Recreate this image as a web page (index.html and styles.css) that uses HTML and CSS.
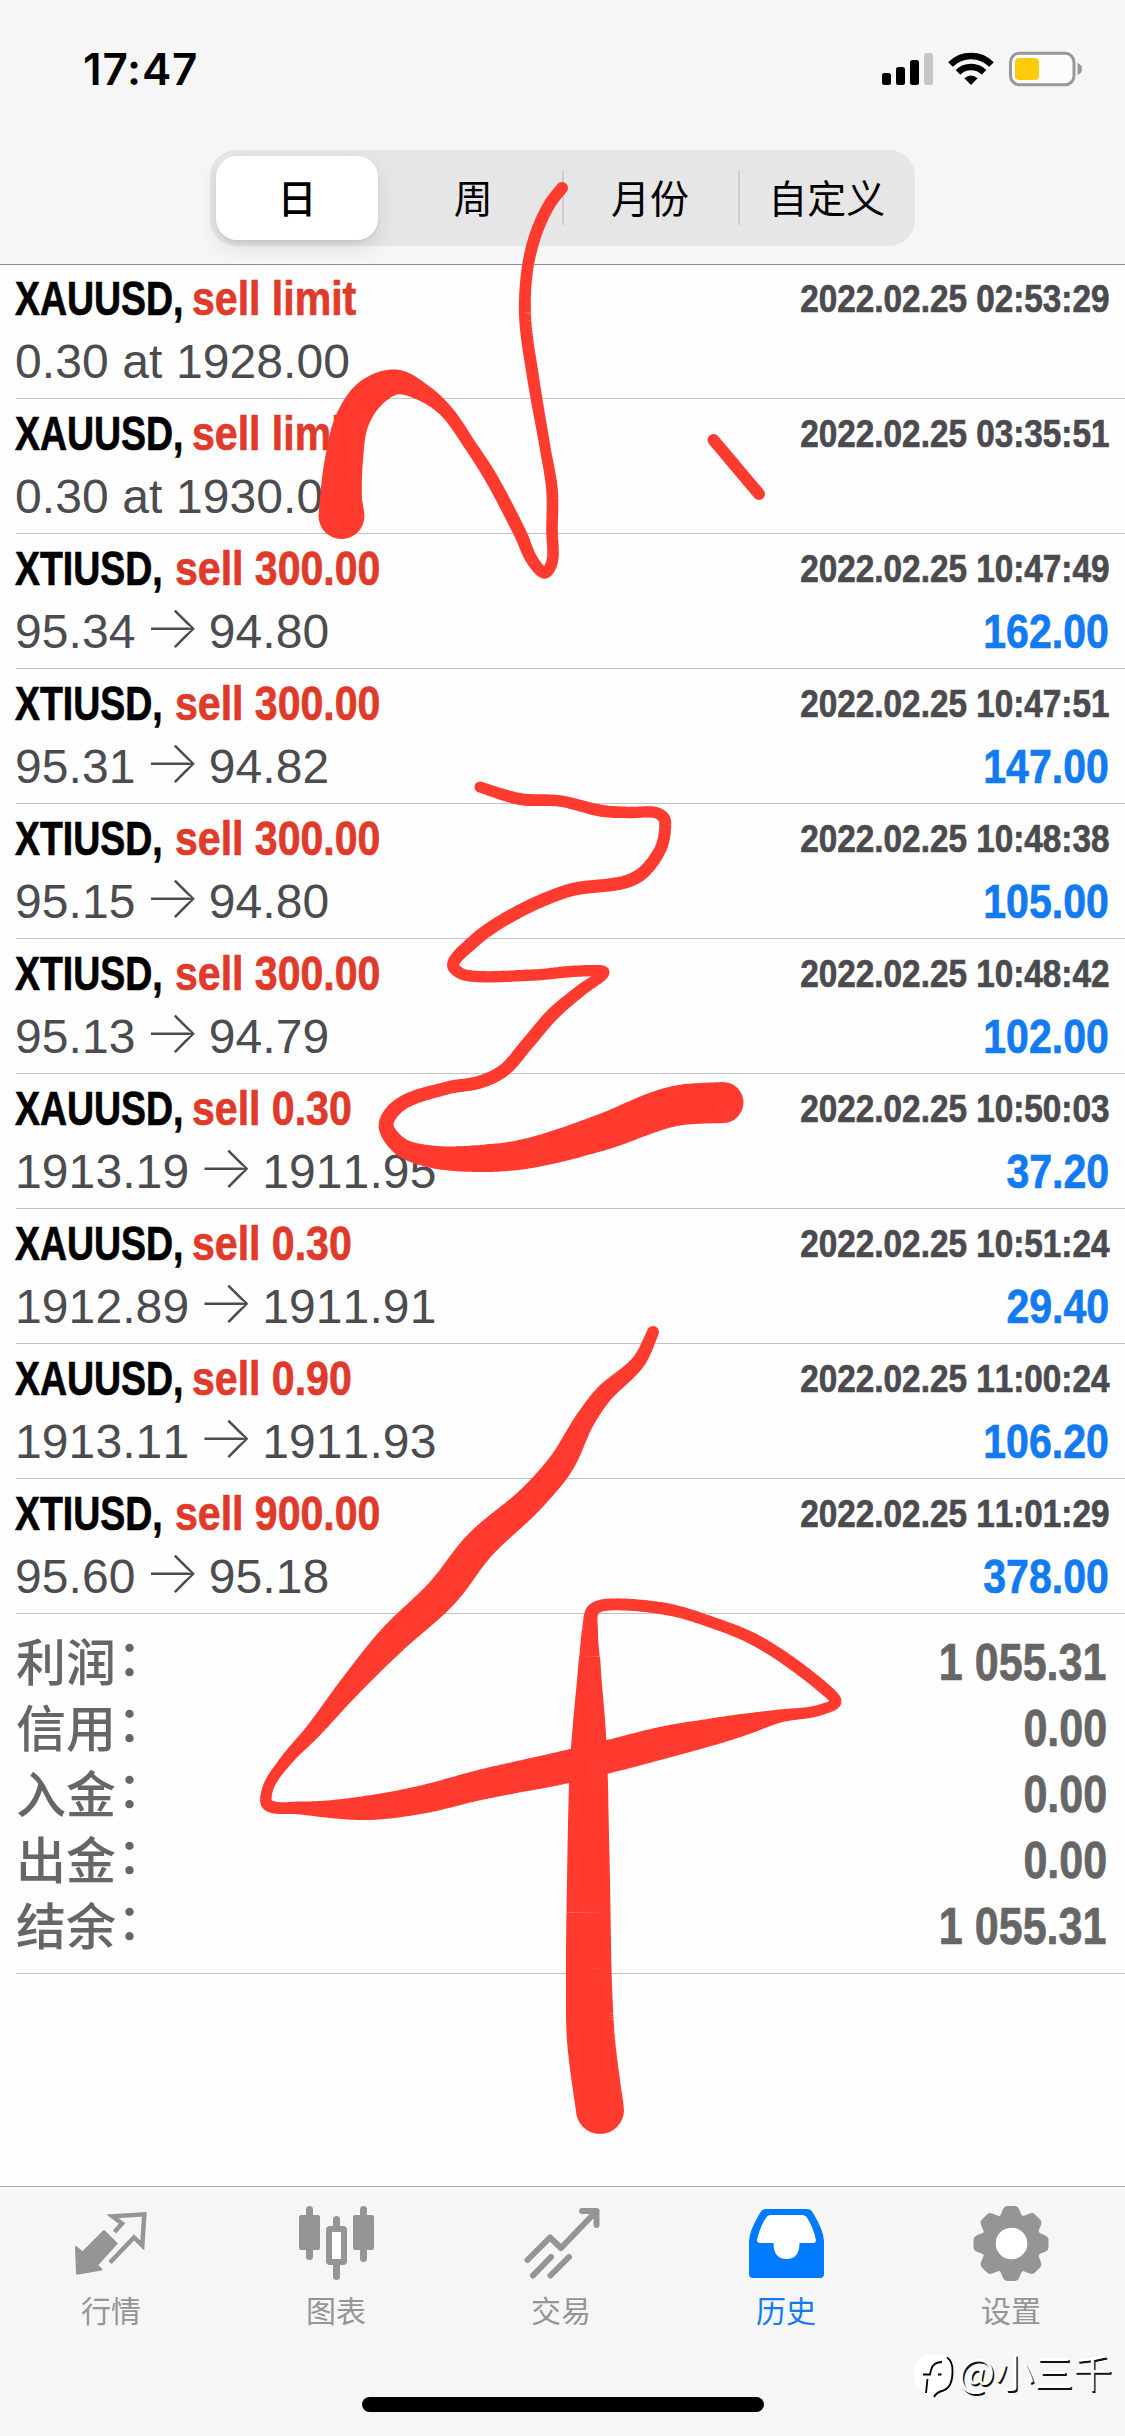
FILE: index.html
```html
<!DOCTYPE html>
<html lang="zh-CN">
<head>
<meta charset="utf-8">
<title>历史</title>
<link rel="stylesheet" href="styles.css">
</head>
<body>
<div class="screen">
  <header class="top">
    <div class="status">
      <span class="clock">17:47</span>
      <svg class="status-icons" width="204" height="40" viewBox="880 48 204 40">
        <g fill="#000">
          <rect x="882" y="73" width="9" height="12" rx="2.5"/>
          <rect x="896" y="67" width="9" height="18" rx="2.5"/>
          <rect x="910" y="60" width="9" height="25" rx="2.5"/>
        </g>
        <rect x="924" y="53" width="9" height="32" rx="2.5" fill="#c6c6c6"/>
        <g fill="none" stroke="#000" stroke-width="6.6">
          <path d="M950.5 64.5a29 29 0 0 1 41 0"/>
          <path d="M958 72.3a18.5 18.5 0 0 1 26 0"/>
        </g>
        <path d="M971 85l-6.6-6.8q6.600-5.400 13.200 0z"/>
        <rect x="1010.500" y="53.200" width="63.500" height="31.600" rx="9" fill="#fcfcfc" stroke="#989898" stroke-width="3"/>
        <rect x="1015" y="58" width="24" height="22" rx="4" fill="#fecb09"/>
        <path d="M1077.500 63q4.500 1.500 4.500 6t-4.500 6z" fill="#989898"/>
      </svg>
    </div>
    <nav class="segments">
      <span class="segment segment-on">日</span>
      <span class="segment">周</span>
      <span class="segment segment-line">月份</span>
      <span class="segment segment-line">自定义</span>
    </nav>
  </header>

  <main class="list">
    <article class="deal"><div class="line head"><b class="symbol xau"><i>XAUUSD,</i></b><b class="side">sell limit</b><b class="date">2022.02.25 02:53:29</b></div><div class="line foot"><span class="price">0.30 at 1928.00</span></div></article>
    <article class="deal"><div class="line head"><b class="symbol xau"><i>XAUUSD,</i></b><b class="side">sell limit</b><b class="date">2022.02.25 03:35:51</b></div><div class="line foot"><span class="price">0.30 at 1930.00</span></div></article>
    <article class="deal"><div class="line head"><b class="symbol xti"><i>XTIUSD,</i></b><b class="side">sell 300.00</b><b class="date">2022.02.25 10:47:49</b></div><div class="line foot"><span class="price">95.34<span class="arrow">→</span>94.80</span><b class="profit">162.00</b></div></article>
    <article class="deal"><div class="line head"><b class="symbol xti"><i>XTIUSD,</i></b><b class="side">sell 300.00</b><b class="date">2022.02.25 10:47:51</b></div><div class="line foot"><span class="price">95.31<span class="arrow">→</span>94.82</span><b class="profit">147.00</b></div></article>
    <article class="deal"><div class="line head"><b class="symbol xti"><i>XTIUSD,</i></b><b class="side">sell 300.00</b><b class="date">2022.02.25 10:48:38</b></div><div class="line foot"><span class="price">95.15<span class="arrow">→</span>94.80</span><b class="profit">105.00</b></div></article>
    <article class="deal"><div class="line head"><b class="symbol xti"><i>XTIUSD,</i></b><b class="side">sell 300.00</b><b class="date">2022.02.25 10:48:42</b></div><div class="line foot"><span class="price">95.13<span class="arrow">→</span>94.79</span><b class="profit">102.00</b></div></article>
    <article class="deal"><div class="line head"><b class="symbol xau"><i>XAUUSD,</i></b><b class="side">sell 0.30</b><b class="date">2022.02.25 10:50:03</b></div><div class="line foot"><span class="price">1913.19<span class="arrow">→</span>1911.95</span><b class="profit">37.20</b></div></article>
    <article class="deal"><div class="line head"><b class="symbol xau"><i>XAUUSD,</i></b><b class="side">sell 0.30</b><b class="date">2022.02.25 10:51:24</b></div><div class="line foot"><span class="price">1912.89<span class="arrow">→</span>1911.91</span><b class="profit">29.40</b></div></article>
    <article class="deal"><div class="line head"><b class="symbol xau"><i>XAUUSD,</i></b><b class="side">sell 0.90</b><b class="date">2022.02.25 11:00:24</b></div><div class="line foot"><span class="price">1913.11<span class="arrow">→</span>1911.93</span><b class="profit">106.20</b></div></article>
    <article class="deal"><div class="line head"><b class="symbol xti"><i>XTIUSD,</i></b><b class="side">sell 900.00</b><b class="date">2022.02.25 11:01:29</b></div><div class="line foot"><span class="price">95.60<span class="arrow">→</span>95.18</span><b class="profit">378.00</b></div></article>
    <section class="summary">
      <div class="total"><span>利润<em>：</em></span><b>1 055.31</b></div>
      <div class="total"><span>信用<em>：</em></span><b>0.00</b></div>
      <div class="total"><span>入金<em>：</em></span><b>0.00</b></div>
      <div class="total"><span>出金<em>：</em></span><b>0.00</b></div>
      <div class="total"><span>结余<em>：</em></span><b>1 055.31</b></div>
    </section>
  </main>

  <footer class="tabbar">
    <div class="tabs">
      <div class="tab">
        <svg width="81" height="81" viewBox="0 0 81 81">
          <path d="M4 47l6.500 5.500L32 31l12.500 12.500L25 65l4.500 4.500L5 73.700z" fill="#959595" stroke="#959595" stroke-width="2" stroke-linejoin="round"/>
          <path d="M42.500 32l7.500-8.500-9.500-7.200 31.800-2-2 31.200L62 37.500 38 62.500" fill="none" stroke="#959595" stroke-width="4.500" stroke-linejoin="miter"/>
        </svg>
        <span>行情</span>
      </div>
      <div class="tab">
        <svg width="81" height="81" viewBox="0 0 81 81" fill="#959595">
          <rect x="2" y="15" width="21" height="35" rx="2"/><rect x="9" y="6" width="7" height="54" rx="3.500"/>
          <rect x="56" y="15" width="21" height="35" rx="2"/><rect x="63" y="6" width="7" height="56" rx="3.500"/>
          <rect x="36" y="16" width="7" height="16" rx="3.500"/><rect x="36" y="60" width="7" height="20" rx="3.500"/>
          <rect x="32" y="29" width="15" height="33" rx="1" fill="#fff" stroke="#959595" stroke-width="6"/>
        </svg>
        <span>图表</span>
      </div>
      <div class="tab">
        <svg width="81" height="81" viewBox="0 0 81 81" fill="none" stroke="#959595" stroke-width="6" stroke-linecap="round" stroke-linejoin="round">
          <path d="M5.500 60L28 37.500 39 48 74.500 11M60 11h14.500v14M11 75.500L29 57M28.500 75.500L47 57"/>
        </svg>
        <span>交易</span>
      </div>
      <div class="tab tab-on">
        <svg width="81" height="81" viewBox="0 0 81 81">
          <path d="M19 9h41q4 0 6 4 10.500 17 11 28v33q0 4-4 4H6q-4 0-4-4V41q.5-11 11-28 2-4 6-4z" fill="#007aff"/>
          <path d="M24 15h31q4 0 5.500 3.500Q66 27 69 40q0 3-3 3H52.500q0 16-13 16t-13-16H13q-3 0-3-3 3-13 8.500-21.500Q20 15 24 15z" fill="#fff"/>
        </svg>
        <span>历史</span>
      </div>
      <div class="tab">
        <svg width="81" height="81" viewBox="0 0 81 81">
          <defs><path id="tooth" d="M27 18.500L31 9q1.500-3 4-3h8q2.500 0 4 3l4 9.500z"/></defs>
          <g fill="#959595">
            <circle cx="39.500" cy="43.500" r="30"/>
            <use href="#tooth"/>
            <use href="#tooth" transform="rotate(45 39 43.500)"/>
            <use href="#tooth" transform="rotate(90 39 43.500)"/>
            <use href="#tooth" transform="rotate(135 39 43.500)"/>
            <use href="#tooth" transform="rotate(180 39 43.500)"/>
            <use href="#tooth" transform="rotate(225 39 43.500)"/>
            <use href="#tooth" transform="rotate(270 39 43.500)"/>
            <use href="#tooth" transform="rotate(315 39 43.500)"/>
          </g>
          <circle cx="39.500" cy="43.500" r="15.800" fill="#fff"/>
        </svg>
        <span>设置</span>
      </div>
    </div>
    <div class="home"></div>
  </footer>

  <svg class="ink" width="1125" height="2436" viewBox="0 0 1125 2436"></svg>

  <div class="watermark">
    <svg width="44" height="46" viewBox="0 0 44 46">
      <rect x="0" y="0" width="39" height="39" rx="15" fill="#fff"/>
      <g fill="none" stroke="#000" stroke-width="1.800">
        <path d="M28 7q-9 0-11 8l-1 4.500H9M13.500 24L12 38M24 19.500h3.500"/>
        <path d="M33 2.500q6 3.500 5.500 14.500 0 15-9 18.500-7 1.500-9.500 6.500"/>
      </g>
    </svg>
    <span>@小三千</span>
  </div>
</div>
<script src="ink.js"></script>
</body>
</html>
```
FILE: styles.css
```css
* { box-sizing: border-box; }
body { margin: 0; background: #fff; font-family: "Liberation Sans", "Noto Sans CJK SC", sans-serif; }
.screen { position: relative; width: 1125px; height: 2436px; overflow: hidden; display: flex; flex-direction: column; background: #fefefe; }

.top { height: 265px; flex: none; margin-bottom: -1px; z-index: 1; background: #f6f6f6; border-bottom: 1px solid #8c8c8c; }
.status { height: 150px; padding: 48px 41px 0 83px; display: flex; justify-content: space-between; align-items: flex-start; }
.clock { font: 600 44px/42px Inter, sans-serif; letter-spacing: 0.8px; }
.status-icons { display: block; }

.segments { width: 705px; height: 96px; margin-left: 210px; padding: 6px 0 6px 6px; display: flex; border-radius: 26px; background: #e6e6e7; }
.segment { width: 177px; padding-bottom: 4px; display: flex; align-items: center; justify-content: center; font: 400 39px/1 "Noto Sans CJK SC", sans-serif; color: #000; }
.segment-on { width: 162px; margin-right: 7px; border-radius: 21px; background: #fff; box-shadow: 0 8px 20px rgba(0,0,0,.10), 0 3px 3px rgba(0,0,0,.05); font-weight: 500; }
.segment-line { background: linear-gradient(#cdcdd0, #cdcdd0) 0 50% / 2px 54px no-repeat; }

.deal { height: 135px; margin-left: 16px; padding: 3px 16px 0 0; border-bottom: 1px solid #c3c3c5; }
.line { display: flex; white-space: nowrap; }
.head { height: 64px; line-height: 64px; font-size: 48px; -webkit-text-stroke: 0.700px currentColor; }
.foot { height: 62px; line-height: 62px; font-size: 48px; justify-content: space-between; }
.symbol { flex: none; color: #000; }
.symbol i { display: inline-block; font-style: normal; transform: translateX(-1px) scaleX(.78); transform-origin: 0 50%; }
.xau { width: 176px; }
.xti { width: 158.500px; }
.side { width: 260px; color: #e03a2b; transform: scaleX(.855); transform-origin: 0 50%; }
.date { margin-left: auto; font-size: 38.500px; font-kerning: none; color: #4b4b4f; transform: scaleX(.865); transform-origin: 100% 50%; }
.price { margin-left: -1px; font-kerning: none; color: #4c4c50; letter-spacing: 0.100px; }
.arrow { display: inline-block; width: 73px; text-align: center; letter-spacing: 0; font-family: Inter, sans-serif; font-size: 60px; font-weight: 200; line-height: 50px; }
.profit { color: #127bf2; transform: scaleX(.855); transform-origin: 100% 50%; -webkit-text-stroke: 0.700px currentColor; }

.summary { height: 360px; margin-left: 16px; padding: 16px 18px 0 0; border-bottom: 1px solid #c3c3c5; color: #666; }
.total { height: 66px; line-height: 66px; display: flex; justify-content: space-between; font-size: 51px; }
.total span { margin-top: -4px; font-family: "Noto Sans CJK SC", sans-serif; font-size: 50px; font-weight: 500; }
.total em { margin-left: 1px; font-style: normal; line-height: 50px; vertical-align: 5px; }
.total b { font-kerning: none; transform: scaleX(.845); transform-origin: 100% 50%; -webkit-text-stroke: 0.700px currentColor; }

.tabbar { height: 250px; flex: none; margin-top: auto; background: #f6f6f6; border-top: 1px solid #a9a9a9; }
.tabs { height: 210px; padding-top: 13px; display: flex; }
.tab { width: 225px; display: flex; flex-direction: column; align-items: center; font: 400 30px/36px "Noto Sans CJK SC", sans-serif; color: #959595; }
.tab svg { display: block; margin-bottom: 10px; }
.tab span { margin-right: 3px; }
.tab-on { color: #127bf2; }
.home { width: 402px; height: 15px; margin: 0 auto; border-radius: 8px; background: #000; }

.ink { position: absolute; left: 0; top: 0; z-index: 2; }
.watermark { position: absolute; left: 914px; top: 2355px; z-index: 3; display: flex; align-items: flex-start; }
.watermark span { margin-top: -5px; font: 400 39px/40px "Noto Sans CJK SC", sans-serif; color: #fff; text-shadow: 1.500px 1.500px 0 #111; white-space: nowrap; }
```
FILE: ink.js
```js
// Pen strokes as [x, y, radius] samples, joined by a smooth curve.
const strokes = [
  [[562,188,6],[551,202,6],[541,221,6],[533,243,6],[527,272,5.8],[525,315,6],[533,377,6],[545,447,5.5],[552,490,5.8],[552,530,5.8],[551.500,564,5.8],[545,573,5.8],[534,563,6],[520,533,6.5],[490,476,6.500],[470,445,6.2],[445,410,6.8],[422,392,9],[396,382,12.5],[370,394,16],[352,421,17],[344,460,19],[341,500,21],[341.500,516,23]],
  [[713.500,440,6],[759,494,6]],
  [[480,787,5.5],[520,799,6],[560,801,5.7],[603,811,6],[630,812.500,5.7],[657,813,5.7],[664,818,6],[665,830,6],[660,850,6],[637,877,6.500],[567,891,6.500],[507,918,6.500],[473,942,6.500],[453,966,6],[463,974.500,5.7],[533,975,5.7],[580,971,5.7],[604,972,5.5],[580,991,6],[553,1014,6.500],[528,1043,6.500],[503,1071,6.500],[480,1082,6.500],[447,1088,6.500],[397,1107,7],[386,1125,7.5],[400,1146,9],[428,1156,11],[480,1158.500,13.500],[525,1154,15],[600,1133,18],[675,1106,20],[723,1102.500,20.500]],
  [[653,1332,6],[639,1361,7],[603,1395,9],[585,1420,10],[561,1464,13],[531,1499,14],[479,1546,16],[443,1592,16.500],[392,1640,15],[347,1690,11],[314,1730,8],[284,1763,6],[268,1788,5.5],[267,1804,6],[300,1808,6.500],[365,1808,12],[420,1800,14],[480,1785,15],[570,1766,16.500],[607,1757,16.500],[666,1742,16],[720,1730,13],[746,1724,10.500],[780,1716,6.500],[820,1710,5.5],[836,1702,5.5],[826,1690,6],[758,1641.500,6],[708,1621,5.7],[666,1609,6],[604,1605,6],[593,1610,6.500],[590,1630,8],[589.500,1662,11],[589,1740,17.300],[588.500,1783,19.500],[588.500,1880,21.500],[589,1986,23],[591,2040,24],[600,2110,24]]
];

function spline(a, b, c, d, t) {
  return 0.5 * (2 * b + (c - a) * t + (2 * a - 5 * b + 4 * c - d) * t * t + (3 * b - a - 3 * c + d) * t * t * t);
}

// Neighbouring spans are scaled to the current one so tight corners do not loop.
function sample(points) {
  const out = [];
  for (let i = 0; i < points.length - 1; i++) {
    const b = points[i], c = points[i + 1];
    const len = Math.hypot(c[0] - b[0], c[1] - b[1]);
    const near = (p, q) => {
      const l = Math.hypot(p[0] - q[0], p[1] - q[1]);
      if (!l) return p;
      const k = Math.min(3, len / l);
      return [q[0] + (p[0] - q[0]) * k, q[1] + (p[1] - q[1]) * k, p[2]];
    };
    const a = near(points[i - 1] || b, b), d = near(points[i + 2] || c, c);
    const steps = Math.ceil(len / 3);
    for (let s = 0; s < steps; s++) out.push([0, 1, 2].map(n => spline(a[n], b[n], c[n], d[n], s / steps)));
  }
  out.push(points[points.length - 1]);
  return out;
}

const ink = document.querySelector(".ink");
for (const stroke of strokes) {
  const pts = sample(stroke);
  let d = "";
  pts.forEach(([x, y, r], i) => {
    d += `M${x - r} ${y}a${r} ${r} 0 1 1 ${2 * r} 0a${r} ${r} 0 1 1 ${-2 * r} 0z`;
    const next = pts[i + 1];
    if (!next) return;
    const [u, v, q] = next, l = Math.hypot(u - x, v - y) || 1;
    const nx = (v - y) / l, ny = -(u - x) / l;
    d += `M${x + nx * r} ${y + ny * r}L${u + nx * q} ${v + ny * q}L${u - nx * q} ${v - ny * q}L${x - nx * r} ${y - ny * r}z`;
  });
  const path = document.createElementNS("http://www.w3.org/2000/svg", "path");
  path.setAttribute("d", d);
  path.setAttribute("fill", "#ff3b30");
  ink.append(path);
}
```
